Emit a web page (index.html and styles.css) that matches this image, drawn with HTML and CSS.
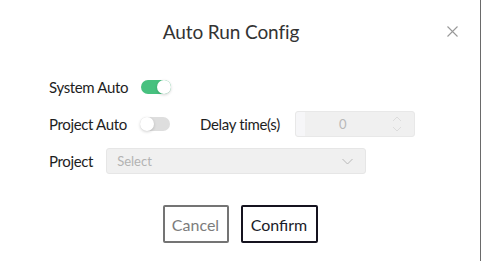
FILE: index.html
```html
<!DOCTYPE html>
<html>
<head>
<meta charset="utf-8">
<link rel="stylesheet" href="styles.css">
</head>
<body>
<div class="dialog">
  <div class="header">
    <div class="title">Auto Run Config</div>
    <span class="close" aria-label="close">
      <svg width="11" height="11" viewBox="0 0 11 11"><path d="M0.5 0.5 L10.5 10.5 M10.5 0.5 L0.5 10.5" stroke="#999" stroke-width="1.1" fill="none"/></svg>
    </span>
  </div>
  <div class="form">
    <div class="row">
      <span class="label fixed">System Auto</span>
      <span class="switch on"><span class="knob"></span></span>
    </div>
    <div class="row">
      <span class="label fixed">Project Auto</span>
      <span class="switch"><span class="knob"></span></span>
      <span class="label delay">Delay time(s)</span>
      <div class="number">
        <span class="num-strip"></span>
        <span class="num-value">0</span>
        <span class="num-arrows">
          <svg width="10" height="22" viewBox="0 0 10 22"><path d="M1 8 L5 4 L9 8 M1 14 L5 18 L9 14" stroke="#dcdcdc" stroke-width="1" fill="none"/></svg>
        </span>
      </div>
    </div>
    <div class="row">
      <span class="label">Project</span>
      <div class="select">
        <span class="placeholder">Select</span>
        <svg class="chev" width="11" height="7" viewBox="0 0 11 7"><path d="M0.5 1 L5.5 6 L10.5 1" stroke="#b8b8b8" stroke-width="1" fill="none"/></svg>
      </div>
    </div>
  </div>
  <div class="footer">
    <button class="btn cancel">Cancel</button>
    <button class="btn confirm">Confirm</button>
  </div>
</div>
</body>
</html>
```
FILE: styles.css
```css
html, body {
  margin: 0;
  padding: 0;
  background: #fff;
}
body {
  font-family: Lato, "Noto Sans", sans-serif;
  color: #222;
}
.dialog {
  width: 480px;
  height: 261px;
  border-right: 1px solid #6a6a6a;
  box-sizing: content-box;
  display: flex;
  flex-direction: column;
}
.header {
  height: 64px;
  display: flex;
  align-items: center;
  position: relative;
  padding-right: 18px;
}
.title {
  flex: 1;
  text-align: center;
  font-size: 19px;
  color: #333;
  letter-spacing: -0.1px;
  padding-bottom: 2px;
}
.close {
  position: absolute;
  right: 22px;
  top: 26px;
  width: 11px;
  height: 11px;
  display: flex;
}
.form {
  padding-left: 49px;
  display: flex;
  flex-direction: column;
  gap: 11px;
  padding-top: 10px;
}
.row {
  display: flex;
  align-items: center;
  height: 26px;
}
.label {
  font-size: 15px;
  color: #1e1e1e;
  letter-spacing: -0.35px;
}
.label.fixed {
  width: 91px;
}
.switch {
  width: 30px;
  height: 14px;
  border-radius: 7px;
  background: #dedede;
  position: relative;
  display: inline-block;
}
.switch.on {
  background: #47c17f;
  margin-left: 1px;
}
.knob {
  position: absolute;
  top: 0;
  left: 0;
  width: 14px;
  height: 14px;
  border-radius: 50%;
  background: #fff;
  box-shadow: 0 1px 3px rgba(0,0,0,0.18);
}
.switch.on .knob {
  left: 16px;
}
.delay {
  margin-left: 30px;
  margin-right: 15px;
}
.number {
  width: 118px;
  height: 24px;
  background: #f0f0f0;
  border: 1px solid #e8e8e8;
  border-radius: 3px;
  display: flex;
  align-items: center;
  position: relative;
}
.num-strip {
  width: 9px;
  height: 24px;
  background: #f6f6f8;
  border-radius: 3px 0 0 3px;
}
.num-value {
  flex: 1;
  text-align: center;
  font-size: 13px;
  color: #b8b8b8;
}
.num-arrows {
  width: 33px;
  height: 24px;
  display: flex;
  align-items: center;
  justify-content: center;
}
.select {
  margin-left: 13px;
  height: 24px;
  background: #f0f0f0;
  border: 1px solid #e6e6e6;
  border-radius: 3px;
  display: flex;
  align-items: center;
  justify-content: space-between;
  padding: 0 12px 0 10px;
  box-sizing: content-box;
  width: 236px;
}
.placeholder {
  font-size: 13px;
  color: #b3b3b3;
}
.footer {
  display: flex;
  justify-content: center;
  gap: 12px;
  padding-top: 31px;
}
.btn {
  height: 38px;
  padding: 0 6px;
  background: #fff;
  border-radius: 2px;
  font-family: Lato, "Noto Sans", sans-serif;
  font-size: 16px;
}
.cancel {
  border: 2px solid #747474;
  color: #7c7c7c;
  width: 66px;
}
.confirm {
  border: 2px solid #15131f;
  color: #1a1a28;
  width: 77px;
}
```
